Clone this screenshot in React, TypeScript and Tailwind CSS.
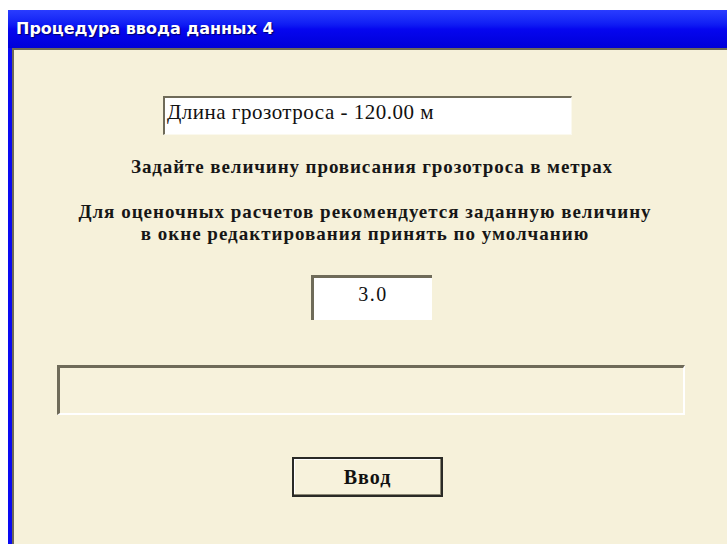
import React from "react";

const serif = { fontFamily: '"Liberation Serif", "Times New Roman", serif' };

export default function App() {
  return (
    <div className="w-[727px] h-[544px] bg-white overflow-hidden flex flex-col pt-[10px] pl-[8px]">
      {/* window */}
      <div className="flex-1 flex flex-col bg-[#0a0af2]">
        {/* title bar */}
        <div className="h-[38px] shrink-0 flex items-center pl-[8px] bg-gradient-to-b from-[#2a3cff] via-[#0606f0] to-[#0000d8]">
          <span
            className="text-white font-bold [text-shadow:1px_1px_1px_#00006a]"
            style={{ fontFamily: '"DejaVu Sans", Tahoma, sans-serif', fontSize: "16px" }}
          >
            Процедура ввода данных 4
          </span>
        </div>
        {/* client area */}
        <div className="flex-1 flex pl-[4px]">
          <div className="flex-1 flex flex-col border-t-2 border-l-2 border-[#6e6a58] bg-[#f6f1da]" style={serif}>
            <div className="h-[46px] shrink-0" />
            {/* wire length field */}
            <div className="shrink-0 ml-[149px] w-[409px] h-[39px] bg-white border-t-2 border-l-2 border-[#6f6b59] border-r border-b border-r-[#fbf9ee] border-b-[#fbf9ee] flex items-start pt-[2px] pl-[2px]">
              <span className="text-[21px] tracking-[0.5px] text-[#111] leading-[24px]">Длина грозотроса - 120.00 м</span>
            </div>
            <div className="h-[21px] shrink-0" />
            <div className="shrink-0 pl-[3px] text-center text-[19px] tracking-[0.9px] font-bold text-[#161616] leading-[22px]">
              Задайте величину провисания грозотроса в метрах
            </div>
            <div className="h-[23px] shrink-0" />
            <div className="shrink-0 pr-[11px] text-center text-[19px] tracking-[1px] font-bold text-[#161616] leading-[22px]">
              <div>Для оценочных расчетов рекомендуется заданную величину</div>
              <div>в окне редактирования принять по умолчанию</div>
            </div>
            <div className="h-[30px] shrink-0" />
            {/* sag value field */}
            <div className="shrink-0 ml-[297px] w-[121px] h-[45px] bg-white border-t-[3px] border-l-[3px] border-[#6f6b59] flex justify-center pt-[5px]">
              <span className="text-[20px] tracking-[1.5px] text-[#111] leading-[22px]">3.0</span>
            </div>
            <div className="h-[45px] shrink-0" />
            {/* status line */}
            <div className="shrink-0 ml-[43px] w-[628px] h-[50px] bg-[#f7f2dc] border-t-[3px] border-l-[3px] border-[#6f6b59] border-r-2 border-b-2 border-r-white border-b-white" />
            <div className="h-[42px] shrink-0" />
            {/* enter button */}
            <div className="shrink-0 ml-[278px] w-[151px] h-[40px] border-2 border-[#2a2a26] bg-[#f7f2dc] flex items-center justify-center shadow-[inset_-1px_-1px_0_#8c8874,inset_1px_1px_0_#ffffff]">
              <span className="text-[20px] font-bold tracking-[1px] text-[#111] leading-none">Ввод</span>
            </div>
          </div>
        </div>
      </div>
    </div>
  );
}
